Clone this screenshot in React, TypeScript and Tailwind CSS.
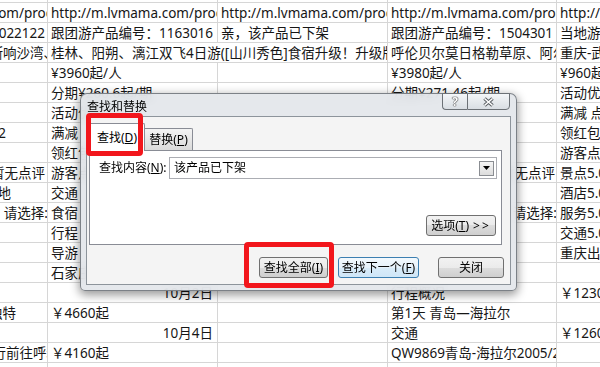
import React from "react";

type Cell = { t?: string; r?: boolean; s?: string; w?: string };

const url = "http://m.lvmama.com/product/1163016";
const L = (t: string, w?: string): Cell => ({ t, w });
const R = (t: string, s: string): Cell => ({ t, r: true, s });
const E: Cell = {};

const COLW = ["w-[170px]", "w-[170px]", "w-[170px]", "w-[169px]", "w-[170px]"];

const rows: Cell[][] = [
  [E, E, E, E, E],
  [L(url), L(url), L(url), L(url), L(url)],
  [R("跟团游产品编号：1022122", "pr-[2px]"), L("跟团游产品编号：1163016"), L("亲，该产品已下架"), L("跟团游产品编号：1504301"), L("当地游产品编号")],
  [R("鄂尔多斯响沙湾、", "-mr-[10px]"), L("桂林、阳朔、漓江双飞4日游([山川秀色]食宿升级！升级版住宿", "w-[340px]"), L("呼伦贝尔莫日格勒草原、阿尔山"), L("重庆-武隆")],
  [E, L("¥3960起/人"), E, L("¥3980起/人"), L("¥960起/人")],
  [E, L("分期¥260.6起/期"), E, L("分期¥271.46起/期"), L("活动优惠")],
  [E, L("活动优惠"), E, E, L("满减 点评返现")],
  [R("满减2", "pr-[41px]"), L("满减"), E, E, L("领红包")],
  [E, L("领红包"), E, E, L("游客点评")],
  [R("暂无点评", "pr-[2px]"), L("游客点评"), E, R("游客点评：暂无点评", "pr-[1px]"), L("景点5.0")],
  [R("目的地", "pr-[36px]"), L("交通"), E, E, L("酒店5.0")],
  [R("出发城市：请选择:", "-mr-[1px]"), L("食宿"), E, R("出发城市：请选择:", "-mr-[1px]"), L("服务5.0")],
  [E, L("行程"), E, E, L("交通5.0")],
  [E, L("导游"), E, E, L("重庆出发")],
  [E, L("石家庄"), E, E, E],
  [E, R("10月2日", "pr-[4px]"), E, L("行程概况"), L("￥1230")],
  [R("风景独特", "pr-[31px]"), L("￥4660起"), E, L("第1天 青岛—海拉尔"), E],
  [E, R("10月4日", "pr-[4px]"), E, L("交通"), L("￥1260")],
  [R("飞行前往呼和", "-mr-[13px]"), L("￥4160起"), E, L("QW9869青岛-海拉尔2005/2200"), E],
  [E, E, E, E, E],
];

function Row({ cells }: { cells: Cell[] }) {
  let idx = 0;
  return (
    <div className="flex h-[20px] border-b border-[#d6d6d6]">
      {cells.map((c, i) => {
        const w = c.w ?? COLW[idx];
        idx += c.w ? 2 : 1;
        return (
          <div
            key={i}
            className={`${w} shrink-0 h-full border-r border-[#d6d6d6] overflow-hidden flex items-center ${c.r ? "justify-end" : "justify-start"}`}
          >
            {c.t ? (
              <span className={`shrink-0 whitespace-nowrap leading-[19px] translate-y-px ${c.r ? c.s : "pl-[3px]"}`}>{c.t}</span>
            ) : null}
          </div>
        );
      })}
    </div>
  );
}

function Btn({ w, children, focus }: { w: string; children: React.ReactNode; focus?: boolean }) {
  return (
    <div
      className={`${w} h-[21px] shrink-0 rounded-[3px] border flex items-center justify-center ${
        focus
          ? "border-[#3c7fb1] bg-[linear-gradient(#f3f9fd,#e6f2fb_50%,#d9ecf9_50%,#cfe6f7)]"
          : "border-[#707070] bg-[linear-gradient(#f2f2f2,#ebebeb_50%,#dddddd_50%,#cfcfcf)]"
      }`}
    >
      {children}
    </div>
  );
}

const U = ({ c }: { c: string }) => <span className="underline underline-offset-1">{c}</span>;

export default function App() {
  return (
    <div className="relative w-[600px] h-[367px] overflow-hidden bg-white text-[#161616] text-[13.5px] [font-family:'Noto_Sans','Noto_Sans_CJK_SC',sans-serif]">
      <div className="-ml-[122px] -mt-[17px] w-[849px]">
        {rows.map((r, i) => (
          <Row key={i} cells={r} />
        ))}
      </div>

      {/* Find & Replace dialog */}
      <div className="absolute left-[80px] top-[93px] w-[437px] h-[198px] flex flex-col rounded-t-[7px] rounded-b-[5px] border border-[#50565c]/70 bg-[#e2e6ea]/90 backdrop-blur-[4px] shadow-[0_3px_10px_1px_rgba(0,0,0,0.4)] px-[5px] pb-[5px] text-[12px] text-black">
        <div className="h-[22px] flex items-center pl-[1px] pt-[3px]">查找和替换</div>

        <div className="absolute -top-px right-[6px] flex">
          <div className="w-[25px] h-[17px] border border-[#6c7176] border-r-0 rounded-bl-[4px] bg-linear-to-b from-[#f4f6f8] to-[#d9dee3] flex items-center justify-center text-[12px] font-bold text-white [text-shadow:0_0_1px_#333,0_0_1px_#333,0_0_1px_#333]">
            ?
          </div>
          <div className="w-[43px] h-[17px] border border-[#6c7176] rounded-br-[4px] bg-linear-to-b from-[#f4f6f8] to-[#d9dee3] flex items-center justify-center">
            <svg width="13" height="10" viewBox="0 0 13 10">
              <path d="M2.5 1.5L10.5 8.5M10.5 1.5L2.5 8.5" stroke="#5a5f64" strokeWidth="3.6" />
              <path d="M2.5 1.5L10.5 8.5M10.5 1.5L2.5 8.5" stroke="#ffffff" strokeWidth="1.6" />
            </svg>
          </div>
        </div>

        <div className="flex-1 flex flex-col border border-[#8d949b] bg-[#f4f4f4]">
          <div className="h-[33px] flex items-end pl-[2px]">
            <div className="relative z-10 -mb-px h-[28px] w-[56px] border border-b-0 border-[#898c95] bg-white rounded-t-[2px] flex items-center justify-center pt-[1px]">
              查找(<U c="D" />)
            </div>
            <div className="h-[22px] w-[48px] border border-l-0 border-b-0 border-[#898c95] bg-linear-to-b from-[#f3f3f3] to-[#dadada] rounded-tr-[2px] flex items-center justify-center">
              替换(<U c="P" />)
            </div>
          </div>
          <div className="ml-[2px] w-[413px] h-[95px] border border-[#898c95] bg-white flex flex-col">
            <div className="flex items-center mt-[6px] pl-[9px]">
              <div className="w-[70px] shrink-0">
                查找内容(<U c="N" />):
              </div>
              <div className="w-[328px] h-[22px] border border-[#abadb3] bg-white flex items-center pl-[4px] pr-[2px]">
                <span className="flex-1">该产品已下架</span>
                <div className="w-[15px] h-[15px] border border-[#8a8d92] bg-linear-to-b from-[#f5f5f5] to-[#dcdcdc] flex items-center justify-center">
                  <svg width="7" height="4" viewBox="0 0 7 4">
                    <path d="M0 0H7L3.5 4Z" fill="#000" />
                  </svg>
                </div>
              </div>
            </div>
            <div className="flex-1" />
            <div className="flex justify-end pr-[5px] pb-[8px]">
              <Btn w="w-[70px]">
                选项(<U c="T" />)<span className="ml-[4px] tracking-[2px]">&gt;&gt;</span>
              </Btn>
            </div>
          </div>
          <div className="flex justify-end pt-[12px] pr-[6px]">
            <Btn w="w-[69px]">
              查找全部(<U c="I" />)
            </Btn>
            <div className="w-[10px] shrink-0" />
            <Btn w="w-[81px]" focus>
              查找下一个(<U c="F" />)
            </Btn>
            <div className="w-[19px] shrink-0" />
            <Btn w="w-[66px]">关闭</Btn>
          </div>
        </div>
      </div>

      {/* red annotation boxes */}
      <div className="absolute left-[86px] top-[113px] w-[57px] h-[43px] rounded-[4px] border-[5px] border-[#f2161c]" />
      <div className="absolute left-[244px] top-[242px] w-[90px] h-[46px] rounded-[4px] border-[5px] border-[#f2161c]" />
    </div>
  );
}
